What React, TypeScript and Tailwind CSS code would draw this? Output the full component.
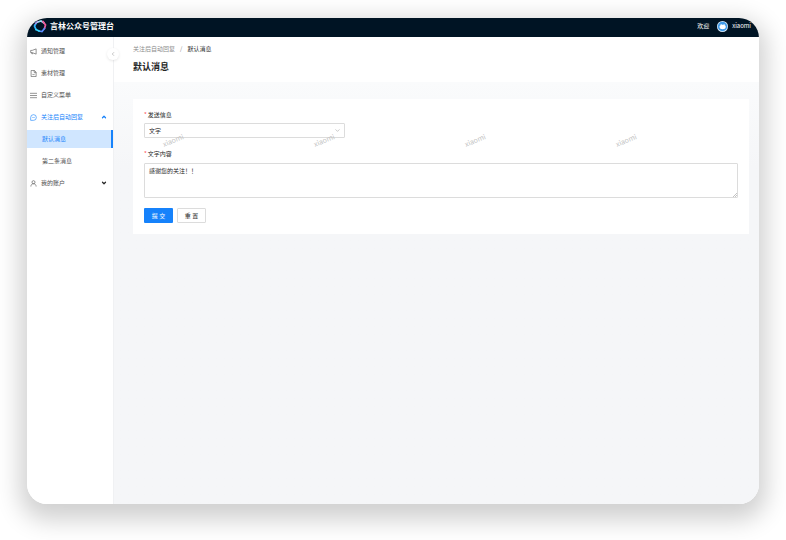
import { useState } from 'react';
import type { ReactNode } from 'react';
import clsx from 'clsx';
import { ChevronDown, ChevronLeft, ChevronUp } from 'lucide-react';

const WATERMARKS = ['wm-1', 'wm-2', 'wm-3', 'wm-4'];

function Logo() {
  return (
    <svg viewBox="0 0 28 28" className="size-[14px] shrink-0" fill="none" strokeLinecap="round" aria-hidden="true">
      <path d="M6 21 3 14 7 7" stroke="#2fb4ff" strokeWidth="3.500" />
      <path d="M7 7 16 4l6 4" stroke="#9bdcf5" strokeWidth="3.500" />
      <path d="M20 5 25 12l-2 7" stroke="#f05a9a" strokeWidth="3.500" />
      <path d="M23 19l-5 6-6-1" stroke="#5a8dff" strokeWidth="3.500" />
      <path d="M12 24 6 21" stroke="#35d6ff" strokeWidth="3.500" />
      <path d="M4 10 9 5" stroke="#d56ad8" strokeWidth="2" />
    </svg>
  );
}

function Avatar() {
  return (
    <svg viewBox="0 0 22 22" className="size-[11px] shrink-0" aria-hidden="true">
      <circle cx="11" cy="11" r="11" fill="#d9ecfb" />
      <circle cx="11" cy="11" r="9.500" fill="#3f9ae8" />
      <path d="M5 12c0-2 1-3 2-3.500L7.500 6l3 1.500h2L15 6l.5 2.500c1.500.8 2 2 2 3.500 0 3-3 4.500-6.200 4.500S5 15 5 12Z" fill="#fff" />
    </svg>
  );
}

function MenuIcon({ children }: { children: ReactNode }) {
  return (
    <svg
      viewBox="0 0 16 16"
      className="size-[7px] shrink-0"
      fill="none"
      stroke="currentColor"
      strokeWidth="1.400"
      strokeLinejoin="round"
      aria-hidden="true"
    >
      {children}
    </svg>
  );
}

interface MenuItemProps {
  label: string;
  icon?: ReactNode;
  arrow?: ReactNode;
  open?: boolean;
  selected?: boolean;
}

function MenuItem({ label, icon, arrow, open, selected }: MenuItemProps) {
  return (
    <li>
      <a
        href="#"
        className={clsx(
          'flex h-[18px] items-center gap-1 pr-[6px]',
          icon ? 'pl-[3px]' : 'pl-[15px]',
          selected && 'border-r-2 border-[#1682fb] bg-[#d0e6ff]',
          open || selected ? 'text-[#1682fb]' : 'text-[#505050]'
        )}
      >
        {icon}
        <span className="flex-1">{label}</span>
        {arrow}
      </a>
    </li>
  );
}

export default function App() {
  const [type, setType] = useState('text');
  const [content, setContent] = useState('感谢您的关注！！');

  return (
    <div className="flex min-h-screen bg-white px-[27px] pt-[18px] pb-9 font-['Noto_Sans_CJK_SC','Noto_Sans',sans-serif] text-[6px] leading-[10px] text-[#262626]">
      <div className="flex flex-1 flex-col overflow-hidden rounded-[20px] bg-white shadow-[0_9px_24px_7px_rgba(0,0,0,0.19)]">
        <header className="flex h-[19px] items-center justify-between bg-[#001424] pr-2 pb-[3px] pl-[6px] text-white">
          <a href="#" className="flex items-center gap-[3px]">
            <Logo />
            <h1 className="text-[8px] font-bold">言林公众号管理台</h1>
          </a>
          <div className="flex items-center">
            <span className="mr-2">欢迎</span>
            <Avatar />
            <span className="ml-1">xiaomi</span>
          </div>
        </header>

        <div className="flex flex-1">
          <aside className="relative z-10 w-[87px] shrink-0 border-r border-[#f0f1f3] bg-white">
            <nav className="pt-[5px]">
              <ul className="flex flex-col gap-1">
                <MenuItem
                  label="通知管理"
                  icon={
                    <MenuIcon>
                      <path d="M14 2v12L5 10.500H1.500v-5H5L14 2ZM4 10.500v2.500h3" />
                    </MenuIcon>
                  }
                />
                <MenuItem
                  label="素材管理"
                  icon={
                    <MenuIcon>
                      <path d="M2.500 1h7.500l4 4v10H2.500V1ZM9.500 1v4.500H14M5.500 9l2.500 2.500L11 8.500" />
                    </MenuIcon>
                  }
                />
                <MenuItem
                  label="自定义菜单"
                  icon={
                    <MenuIcon>
                      <path d="M0 3h16M0 8h16M0 13h16" />
                    </MenuIcon>
                  }
                />
                <MenuItem
                  label="关注后自动回复"
                  open
                  icon={
                    <MenuIcon>
                      <path d="M1.500 14.500V8A6.500 6.500 0 1 1 8 14.500H1.500ZM4.500 8h1.500M7.300 8h1.500M10 8h1.500" />
                    </MenuIcon>
                  }
                  arrow={<ChevronUp size={6} strokeWidth={5} />}
                />
                <MenuItem label="默认消息" selected />
                <MenuItem label="第二条消息" />
                <MenuItem
                  label="我的账户"
                  icon={
                    <MenuIcon>
                      <circle cx="8" cy="5" r="3.500" />
                      <path d="M2 15c0-4 2.500-6.500 6-6.500s6 2.500 6 6.500" />
                    </MenuIcon>
                  }
                  arrow={<ChevronDown size={6} strokeWidth={5} className="text-[#262626]" />}
                />
              </ul>
            </nav>
            <button
              type="button"
              aria-label="收起菜单"
              className="absolute top-[11px] -right-[6px] flex size-3 items-center justify-center rounded-full bg-white text-[#8c8c8c] shadow-[0_1px_3px_rgba(0,0,0,0.1)]"
            >
              <ChevronLeft size={6} />
            </button>
          </aside>

          <main className="relative flex min-w-0 flex-1 flex-col bg-[#f5f6f8]">
            <div className="bg-white px-[19px] pt-[7px] pb-[9px]">
              <nav className="flex gap-[5px]">
                <a href="#" className="text-[#8c8c8c]">关注后自动回复</a>
                <span className="text-[#8c8c8c]">/</span>
                <span>默认消息</span>
              </nav>
              <h2 className="mt-[7px] text-[9px] leading-3 font-bold">默认消息</h2>
            </div>

            <div className="flex-1 bg-linear-to-b from-[#fafbfc] to-[#f5f6f8] to-20% pt-[17px] pr-[10px] pl-[19px]">
              <form className="bg-white p-[11px]" onSubmit={(e) => e.preventDefault()}>
                <label htmlFor="type" className="flex gap-px">
                  <span className="text-[#ff4d4f]">*</span>
                  发送信息
                </label>
                <div className="relative mt-[3px] w-[201px]">
                  <select
                    id="type"
                    value={type}
                    onChange={(e) => setType(e.target.value)}
                    className="block h-[15px] w-full appearance-none rounded-[1px] border border-[#dcdcdc] bg-white px-1 leading-[13px]"
                  >
                    <option value="text">文字</option>
                  </select>
                  <ChevronDown
                    size={7}
                    className="pointer-events-none absolute top-1 right-1 text-[#a6a6a6]"
                  />
                </div>

                <label htmlFor="content" className="mt-[11px] flex gap-px">
                  <span className="text-[#ff4d4f]">*</span>
                  文字内容
                </label>
                <div className="relative mt-1">
                  <textarea
                    id="content"
                    value={content}
                    onChange={(e) => setContent(e.target.value)}
                    className="block h-[35px] w-full resize-none rounded-[1px] border border-[#dcdcdc] bg-white px-1 py-[2px]"
                  />
                  {/* resize grip */}
                  <svg viewBox="0 0 6 6" className="absolute right-px bottom-px size-1" aria-hidden="true">
                    <path d="M0 6 6 0M3 6l3-3" stroke="#a6a6a6" />
                  </svg>
                </div>

                <div className="mt-[10px] flex gap-1">
                  <button type="submit" className="h-[15px] w-[29px] rounded-[1px] bg-[#1682fb] text-white">
                    提 交
                  </button>
                  <button
                    type="button"
                    onClick={() => setContent('')}
                    className="h-[15px] w-[29px] rounded-[1px] border border-[#dcdcdc] bg-white"
                  >
                    重 置
                  </button>
                </div>
              </form>
            </div>

            <div
              className="pointer-events-none absolute top-[98px] left-12 flex text-[#c4c4c4]"
              aria-hidden="true"
            >
              {WATERMARKS.map((id) => (
                <span key={id} className="w-[151px]">
                  <span className="inline-block -rotate-[22deg] text-[7px]">xiaomi</span>
                </span>
              ))}
            </div>
          </main>
        </div>
      </div>
    </div>
  );
}
